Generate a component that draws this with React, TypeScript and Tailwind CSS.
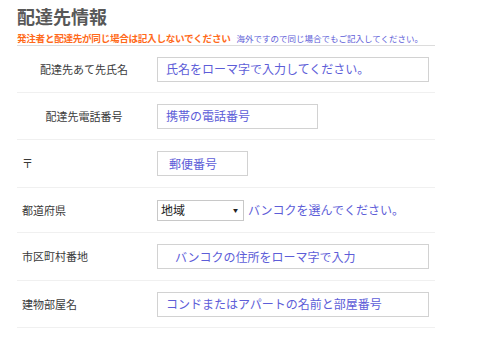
const blue = "text-[#5d5dd8]";

function Field({ width, pad, text }: { width: string; pad: string; text: string }) {
  return (
    <div
      className={`h-[25px] ${width} ${pad} border border-[#d2d2d2] bg-white flex items-center text-[12px] ${blue} whitespace-nowrap`}
    >
      {text}
    </div>
  );
}

function Row({
  label,
  center = false,
  height,
  children,
}: {
  label: string;
  center?: boolean;
  height: string;
  children: React.ReactNode;
}) {
  return (
    <div className={`grid grid-cols-[134px_1fr] items-center ${height} border-b border-[#f0f0f0]`}>
      <div className={`text-[11px] text-[#3a3a3a] ${center ? "text-center" : "pl-[5px]"}`}>{label}</div>
      <div className="pl-[6px] flex items-center">{children}</div>
    </div>
  );
}

export default function App() {
  return (
    <div className="w-[500px] h-[341px] bg-white font-['Noto_Sans_CJK_JP',sans-serif] overflow-hidden">
      <div className="w-[435px] pl-[17px] pt-[3px]">
        <h2 className="text-[18px] font-bold text-[#585858] leading-[26px]">配達先情報</h2>
        <div className="flex items-baseline gap-[6px] pt-[3px] pb-[1px] leading-[12px] border-b border-[#dcdcdc] whitespace-nowrap">
          <span className="text-[9.6px] font-bold text-[#ff6a1a] tracking-[-0.3px]">
            発注者と配達先が同じ場合は記入しないでください
          </span>
          <span className={`text-[8.5px] ${blue}`}>海外ですので同じ場合でもご記入してください。</span>
        </div>

        <Row label="配達先あて先氏名" center height="h-[47px]">
          <Field width="w-[272px]" pad="pl-[8px]" text="氏名をローマ字で入力してください。" />
        </Row>
        <Row label="配達先電話番号" center height="h-[47px]">
          <Field width="w-[161px]" pad="pl-[8px]" text="携帯の電話番号" />
        </Row>
        <Row label="〒" height="h-[48px]">
          <Field width="w-[91px]" pad="pl-[11px]" text="郵便番号" />
        </Row>
        <Row label="都道府県" height="h-[45px]">
          <div className="h-[21px] w-[87px] border border-[#c8c8c8] bg-white flex items-center justify-between pl-[3px] pr-[5px]">
            <span className="text-[12px] text-[#222]">地域</span>
            <span className="text-[5px] text-[#222]">▼</span>
          </div>
          <span className={`ml-[4px] text-[12px] ${blue}`}>バンコクを選んでください。</span>
        </Row>
        <Row label="市区町村番地" height="h-[48px]">
          <Field width="w-[272px]" pad="pl-[17px]" text="バンコクの住所をローマ字で入力" />
        </Row>
        <Row label="建物部屋名" height="h-[47px]">
          <Field width="w-[272px]" pad="pl-[8px]" text="コンドまたはアパートの名前と部屋番号" />
        </Row>
      </div>
    </div>
  );
}
